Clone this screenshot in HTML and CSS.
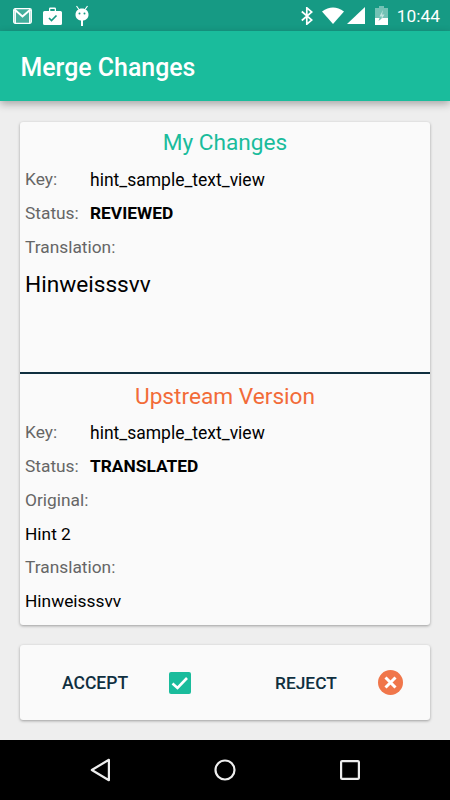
FILE: index.html
```html
<!DOCTYPE html>
<html lang="en">
<head>
<meta charset="utf-8">
<title>Merge Changes</title>
<link rel="stylesheet" href="styles.css">
</head>
<body>
<div class="phone">
  <header class="status">
    <div class="status-left">
      <svg class="ic" width="19" height="16" viewBox="0 0 19 16"><rect x="0.700" y="0.700" width="17.600" height="14.600" rx="1.500" fill="#fff" fill-opacity=".2" stroke="#fff" stroke-width="1.300"/><path d="M1.500 1.500L9.500 8.500 17.500 1.500" fill="none" stroke="#fff" stroke-width="2"/><path d="M2.200 2v13M16.800 2v13" stroke="#fff" stroke-width="1.500"/></svg>
      <svg class="ic" width="19" height="18" viewBox="0 0 19 18"><path d="M1.500 4H6V1.800Q6 .5 7.300 .5h4.400Q13 .5 13 1.800V4h4.500Q19 4 19 5.500v11Q19 18 17.500 18h-16Q0 18 0 16.500v-11Q0 4 1.500 4zM7.300 4h4.400V2H7.300z" fill="#fff" fill-rule="evenodd"/><path d="M6 11l2.500 2.500L13.500 8.500" fill="none" stroke="#169a84" stroke-width="1.700"/></svg>
      <svg class="ic droid" width="16" height="21" viewBox="0 0 16 21"><path d="M2.500 1l2.500 3.500M13.500 1L11 4.500" stroke="#fff" stroke-width="1.200"/><path d="M8 3.500c3.800 0 6.500 2.500 6.500 6.200S11.500 15.500 8 15.500 1.500 13.400 1.500 9.700 4.200 3.500 8 3.500z" fill="#fff"/><rect x="7" y="15" width="2" height="6" fill="#fff"/><circle cx="5.500" cy="8.500" r="1" fill="#169a84"/><circle cx="10.500" cy="8.500" r="1" fill="#169a84"/></svg>
    </div>
    <div class="status-right">
      <svg class="ic bt" width="12" height="18" viewBox="0 0 12 18"><path d="M.8 4.500l10 8.500-5 4.200V.8l5 4.200-10 8.500" fill="none" stroke="#fff" stroke-width="1.700"/></svg>
      <svg class="ic wifi" width="22" height="17" viewBox="0 0 22 17"><path d="M0 4.500Q11-3.500 22 4.500L11 17z" fill="#fff"/></svg>
      <svg class="ic signal" width="18" height="17" viewBox="0 0 18 17"><path d="M18 0v17H0z" fill="#fff"/></svg>
      <svg class="ic batt" width="13" height="19" viewBox="0 0 13 19"><path d="M4 0h5v2h4v17H0V2h4z" fill="#fff" fill-opacity=".4"/><path d="M0 12h4.500L3.500 15l4-3H13v7H0z" fill="#fff"/><path d="M8 4L4.500 10.500h2.500L5.500 15 9.500 8.500H7z" fill="#fff" fill-opacity=".55"/></svg>
      <span class="time">10:44</span>
    </div>
  </header>
  <div class="appbar"><h1>Merge Changes</h1></div>
  <main class="content">
    <section class="card merge">
      <div class="mine">
        <h2 class="title green">My Changes</h2>
        <div class="row"><span class="label">Key:</span><span class="val">hint_sample_text_view</span></div>
        <div class="row"><span class="label">Status:</span><strong class="val">REVIEWED</strong></div>
        <div class="row"><span class="label wide">Translation:</span></div>
        <div class="big">Hinweisssvv</div>
      </div>
      <div class="upstream">
        <h2 class="title orange">Upstream Version</h2>
        <div class="row"><span class="label">Key:</span><span class="val">hint_sample_text_view</span></div>
        <div class="row"><span class="label">Status:</span><strong class="val">TRANSLATED</strong></div>
        <div class="row"><span class="label wide">Original:</span></div>
        <div class="row tight"><span class="plain">Hint 2</span></div>
        <div class="row"><span class="label wide">Translation:</span></div>
        <div class="row"><span class="plain">Hinweisssvv</span></div>
      </div>
    </section>
    <section class="card actions">
      <div class="action accept">
        <span class="act-label">ACCEPT</span>
        <svg width="22" height="22" viewBox="0 0 22 22"><rect width="22" height="22" rx="2" fill="#1abc9c"/><path d="M3.500 11.500l5 4.500 9.500-10" fill="none" stroke="#fff" stroke-width="2.600"/></svg>
      </div>
      <div class="action reject">
        <span class="act-label">REJECT</span>
        <svg width="25" height="25" viewBox="0 0 25 25"><circle cx="12.500" cy="12.500" r="12.500" fill="#f0764a"/><path d="M7.500 7.500l10 10M17.500 7.500l-10 10" stroke="#fff" stroke-width="3"/></svg>
      </div>
    </section>
  </main>
  <nav class="navbar">
    <svg width="24" height="24" viewBox="0 0 24 24"><path d="M20.900 1.800v20.400L3.800 12z" fill="none" stroke="#eee" stroke-width="2.200" stroke-linejoin="round"/></svg>
    <svg width="24" height="24" viewBox="0 0 24 24"><circle cx="12" cy="12" r="9.500" fill="none" stroke="#eee" stroke-width="2.200"/></svg>
    <svg width="24" height="24" viewBox="0 0 24 24"><rect x="3.100" y="3.100" width="17.800" height="17.800" rx="1" fill="none" stroke="#eee" stroke-width="2.200"/></svg>
  </nav>
</div>
</body>
</html>
```

FILE: styles.css
```css
* { box-sizing: border-box; }
html, body { margin: 0; padding: 0; }
body { font-family: Roboto, sans-serif; background: #eeeeee; }
.phone { width: 450px; height: 800px; display: flex; flex-direction: column; overflow: hidden; }
.status { height: 31px; flex: none; background: #169a84; display: flex; justify-content: space-between; align-items: center; padding: 0 10px 0 13px; color: #fff; }
.status-left, .status-right { display: flex; align-items: center; }
.status-left { gap: 11px; }
.status-right { gap: 0; }
.ic { display: block; }
.droid { margin-left: 1px; }
.wifi { margin-left: 9px; }
.signal { margin-left: 3px; }
.batt { margin-left: 10px; }
.time { font-size: 17.330px; font-weight: 400; margin-left: 9px; }
.appbar { height: 70px; flex: none; background: #1abc9c; display: flex; align-items: center; padding-left: 20.500px; box-shadow: 0 3px 8px rgba(0,0,0,.3); position: relative; z-index: 1; }
.appbar h1 { margin: 0; font-size: 24.900px; font-weight: 500; color: #fff; padding-top: 2px; }
.content { flex: 1; display: flex; flex-direction: column; gap: 20px; padding: 21px 20px 0; }
.card { background: #fafafa; border-radius: 3px; box-shadow: 0 1px 3px rgba(0,0,0,.35); }
.merge { height: 503px; flex: none; display: flex; flex-direction: column; }
.mine { height: 252px; border-bottom: 2px solid #0f2f3f; flex: none; }
.upstream { flex: 1; }
.title { margin: 0; height: 40px; line-height: 42px; text-align: center; font-size: 22.670px; font-weight: 400; }
.upstream .title { line-height: 46px; height: 41px; }
.green { color: #1abc9c; }
.orange { color: #f26b38; }
.row { height: 34px; display: flex; align-items: center; padding-left: 5px; font-size: 17.500px; }
.row.tight { height: 33px; }
.label { width: 65px; color: #666; flex: none; font-size: 17.330px; }
.label.wide { width: auto; }
.val { color: #000; padding-top: 1px; }
strong.val { font-weight: 700; font-size: 17.330px; padding-top: 0; }
.plain { color: #000; font-size: 17.330px; }
.big { padding: 7px 0 0 5px; font-size: 22.670px; line-height: 28px; color: #000; }
.actions { height: 75px; flex: none; display: flex; align-items: center; }
.action { display: flex; align-items: center; }
.accept { margin-left: 42px; gap: 41px; }
.reject { margin-left: 84px; gap: 41px; }
.act-label { font-size: 17.500px; font-weight: 500; color: #0f2f3f; }
.reject .act-label { font-size: 17.330px; }
.navbar { height: 60px; flex: none; background: #000; display: flex; align-items: center; justify-content: center; gap: 101px; }
```
